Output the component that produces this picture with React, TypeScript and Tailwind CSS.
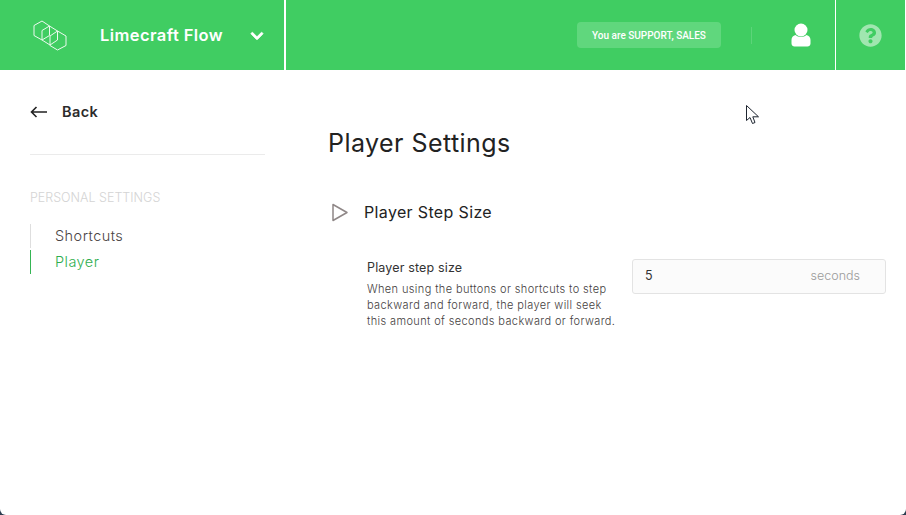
import React from 'react';
import { FaChevronDown, FaQuestionCircle } from 'react-icons/fa';

const Logo = () => (
  <svg width="34" height="31" viewBox="0 0 34 31" fill="none" stroke="white" strokeWidth="1" strokeLinejoin="round" className="opacity-90">
    <path d="M1 5.5 L9 1 L16.5 6 L16.5 15.5 L9 20 L1 15.5 Z" />
    <path d="M9 10.5 L16.5 6 L24.5 11 L24.5 20 L17 25 L9 20 Z" />
    <path d="M17 16 L24.5 11 L33 16 L33 25.5 L24.5 30 L17 25.5 Z" />
  </svg>
);

const UserIcon = () => (
  <svg width="20" height="24" viewBox="0 0 20 24" fill="white">
    <circle cx="10" cy="7" r="6.5" />
    <path d="M4.5 12 C7 14.5 13 14.5 15.5 12 C18 12.5 19.5 14.5 19.5 17 L19.5 20.5 C19.5 22.5 18 23.5 16.5 23.5 L3.5 23.5 C2 23.5 0.5 22.5 0.5 20.5 L0.5 17 C0.5 14.5 2 12.5 4.5 12 Z" />
  </svg>
);

const Cursor = () => (
  <svg width="14" height="20" viewBox="0 0 14 20" className="absolute left-[746px] top-[105px]">
    <path d="M0.5 0.5 L0.5 15.5 L4 12.5 L6.5 18.5 L9 17.5 L6.8 11.8 L12.5 11.8 Z" fill="white" stroke="#1e2530" strokeWidth="1" />
  </svg>
);

export default function App() {
  return (
    <div className="relative h-[515px] w-[906px] overflow-hidden bg-[#2c3e50] font-['Inter',sans-serif]">
      <div className="flex h-full flex-col overflow-hidden rounded-b-[6px] bg-white">
        <header className="flex h-[70px] shrink-0 border-r border-white bg-[#40cd62] text-white">
          <div className="flex w-[286px] items-center border-r-2 border-white pl-[33px]">
            <Logo />
            <span className="ml-[33px] text-[16.5px] font-semibold tracking-[0.42px]">Limecraft Flow</span>
            <FaChevronDown size={14} stroke="currentColor" strokeWidth={30} className="ml-[27px] mt-[2px]" />
          </div>
          <div className="flex flex-1 items-center pl-[291px]">
            <div className="flex h-[26px] w-[144px] items-center justify-center rounded-[4px] bg-[#60d77d] font-['Roboto',sans-serif] text-[10px] font-medium">
              You are SUPPORT, SALES
            </div>
            <div className="ml-[30px] h-[17px] w-px bg-white/15" />
            <div className="flex w-[83px] justify-end pr-[24px]">
              <UserIcon />
            </div>
          </div>
          <div className="flex w-[70px] items-center justify-center border-l border-white">
            <FaQuestionCircle size={23} className="text-[#a0e6b0]" />
          </div>
        </header>
        <div className="flex flex-1">
          <aside className="w-[328px] shrink-0 pl-[30px] pt-[33px]">
            <div className="w-[235px] border-b border-[#ebebeb] pb-[33px]">
              <div className="flex items-center">
                <svg width="17" height="12" viewBox="0 0 17 12" fill="none" stroke="#222" strokeWidth="1.6">
                  <path d="M17 6 H1.5 M6.5 1 L1.5 6 L6.5 11" />
                </svg>
                <span className="ml-[15px] text-[14.5px] font-semibold tracking-[0.4px] leading-[18px] text-[#2b2b2b]">Back</span>
              </div>
            </div>
            <div className="mt-[35px] text-[12.5px] font-light leading-[16px] text-[#d4d4d4]">PERSONAL SETTINGS</div>
            <nav className="mt-[18px] flex flex-col gap-[2px] text-[14.5px] font-light tracking-[0.45px]">
              <div className="flex h-[24px] items-center border-l border-[#dedede] pl-[24px] text-[#4a4444]">Shortcuts</div>
              <div className="flex h-[24px] items-center border-l border-[#35b554] pl-[24px] text-[#2fae4e]">Player</div>
            </nav>
          </aside>
          <main className="flex-1 pt-[57px]">
            <h1 className="text-[25px] font-normal tracking-[0.45px] leading-[32px] text-[#222]">Player Settings</h1>
            <div className="mt-[41px] flex items-center">
              <svg width="18" height="19" viewBox="0 0 18 19" fill="none" stroke="#8f8787" strokeWidth="1.5" className="ml-[3px]" strokeLinejoin="round">
                <path d="M2 1.5 L16 9.5 L2 17.5 Z" />
              </svg>
              <h2 className="ml-[15px] text-[16px] font-normal tracking-[0.35px] leading-[24px] text-[#222]">Player Step Size</h2>
            </div>
            <div className="ml-[39px] mt-[35px] flex">
              <div className="w-[265px]">
                <div className="text-[12.5px] font-normal tracking-[0.15px] leading-[18px] text-[#333]">Player step size</div>
                <p className="mt-[4px] text-[11px] font-light tracking-[0.38px] leading-[16px] text-[#444040]">
                  When using the buttons or shortcuts to step<br />
                  backward and forward, the player will seek<br />
                  this amount of seconds backward or forward.
                </p>
              </div>
              <div className="flex h-[35px] w-[254px] items-center justify-between rounded-[3px] border border-[#e3e3e3] bg-[#fbfbfb] pl-[12px] pr-[25px] text-[12.5px]">
                <span className="text-[#333]">5</span>
                <span className="font-light text-[#9a9a9a]">seconds</span>
              </div>
            </div>
          </main>
        </div>
      </div>
      <Cursor />
    </div>
  );
}
